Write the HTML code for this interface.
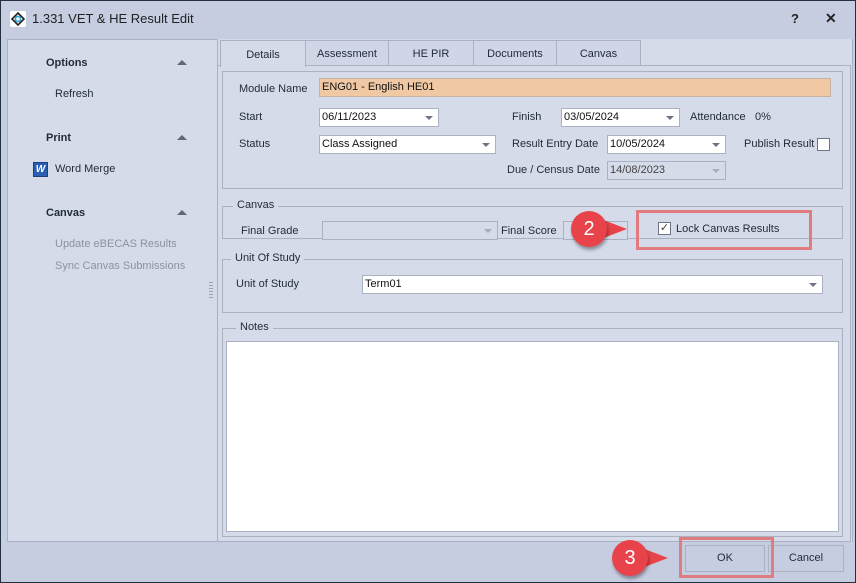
<!DOCTYPE html>
<html><head><style>
*{box-sizing:border-box;margin:0;padding:0}
body{width:856px;height:583px;overflow:hidden;font-family:"Liberation Sans",sans-serif;font-size:11px;color:#1e2a3a;background:#c7cde1;position:relative}
.a{position:absolute}
.win{left:0;top:0;width:856px;height:583px;border:1px solid #23303f}
.inp{position:absolute;background:#fff;border:1px solid #a9b1c3;height:19px;padding:2px 2px;font-size:11px;color:#111}
.dis{background:#d6dbe9;color:#444}
.arr{position:absolute;right:5px;top:7px;width:0;height:0;border-left:4px solid transparent;border-right:4px solid transparent;border-top:4px solid #6d7585}
.dis .arr{border-top-color:#a5acbb}
.grp{position:absolute;border:1px solid #a9b1c3}
.leg{position:absolute;top:-8px;background:#d6dbe9;padding:0 4px;color:#1e2a3a}
.tab{position:absolute;top:40px;height:26px;border:1px solid #a9b1c3;background:#d0d6e6;text-align:center;line-height:26px}
.badge{position:absolute;width:36px;height:36px;border-radius:50%;background:#e8434a;color:#fff;font-size:20px;text-align:center;line-height:36px;box-shadow:1px 3px 3px rgba(0,0,0,.35)}
.tri{position:absolute;width:0;height:0;border-top:13px solid transparent;border-bottom:13px solid transparent;border-left:34px solid #e8434a}
.rbox{position:absolute;border:3px solid #e07b80}
.up{position:absolute;width:0;height:0;border-left:5px solid transparent;border-right:5px solid transparent;border-bottom:5px solid #5f6778}
</style></head><body>
<div class="a win"></div>
<div class="a" style="left:10px;top:11px;width:16px;height:16px;background:#fff;border-radius:2px"></div>
<svg class="a" style="left:10px;top:11px" width="16" height="16" viewBox="0 0 16 16"><path d="M8 2 L14 8 L8 14 L2 8Z" fill="none" stroke="#222" stroke-width="1.6"/><circle cx="8" cy="8" r="2.6" fill="none" stroke="#2a9fd8" stroke-width="1.6"/></svg>
<div class="a" style="left:32px;top:11px;font-size:13px;color:#222">1.331 VET &amp; HE Result Edit</div>
<div class="a" style="left:791px;top:11px;font-size:13px;font-weight:bold;color:#222">?</div>
<div class="a" style="left:825px;top:10px;font-size:14px;font-weight:bold;color:#222">✕</div>
<div class="a" style="left:7px;top:39px;width:214px;height:503px;background:#d6dbe9;border:1px solid #a9b1c3"></div>
<div class="a" style="left:46px;top:57px;font-weight:bold">Options</div><div class="up" style="left:177px;top:60px"></div>
<div class="a" style="left:55px;top:88px">Refresh</div>
<div class="a" style="left:46px;top:132px;font-weight:bold">Print</div><div class="up" style="left:177px;top:135px"></div>
<div class="a" style="left:33px;top:162px;width:15px;height:15px;background:#2b5fb3;border:1px solid #1c3f80;color:#fff;font-size:10px;font-weight:bold;font-style:italic;text-align:center;line-height:13px">W</div>
<div class="a" style="left:55px;top:163px">Word Merge</div>
<div class="a" style="left:46px;top:207px;font-weight:bold">Canvas</div><div class="up" style="left:177px;top:210px"></div>
<div class="a" style="left:55px;top:238px;color:#8a92a3">Update eBECAS Results</div>
<div class="a" style="left:55px;top:260px;color:#8a92a3">Sync Canvas Submissions</div>
<div class="a" style="left:209px;top:282px;width:4px;height:16px;background:repeating-linear-gradient(#9aa2b2 0 1px,transparent 1px 3px)"></div>
<div class="a" style="left:217px;top:39px;width:636px;height:503px;background:#d6dbe9;border-left:1px solid #a9b1c3;border-right:1px solid #a9b1c3"></div>
<div class="a" style="left:217px;top:65px;width:634px;height:477px;border:1px solid #a9b1c3;background:#d6dbe9"></div>
<div class="tab" style="left:305px;width:84px">Assessment</div>
<div class="tab" style="left:388px;width:86px">HE PIR</div>
<div class="tab" style="left:473px;width:84px">Documents</div>
<div class="tab" style="left:556px;width:85px">Canvas</div>
<div class="tab" style="left:220px;width:86px;background:#d6dbe9;border-bottom:none;height:27px;line-height:28px">Details</div>
<div class="grp" style="left:222px;top:71px;width:621px;height:118px"></div>
<div class="a" style="left:239px;top:83px">Module Name</div>
<div class="inp" style="left:319px;top:78px;width:512px;height:19px;background:#f0c9a4;border-color:#c4b3a3;padding-top:2px">ENG01 - English HE01</div>
<div class="a" style="left:239px;top:111px">Start</div>
<div class="inp" style="left:319px;top:108px;width:120px">06/11/2023<i class="arr"></i></div>
<div class="a" style="left:512px;top:111px">Finish</div>
<div class="inp" style="left:561px;top:108px;width:119px">03/05/2024<i class="arr"></i></div>
<div class="a" style="left:690px;top:111px">Attendance</div><div class="a" style="left:755px;top:111px">0%</div>
<div class="a" style="left:239px;top:138px">Status</div>
<div class="inp" style="left:319px;top:135px;width:177px">Class Assigned<i class="arr"></i></div>
<div class="a" style="left:512px;top:138px">Result Entry Date</div>
<div class="inp" style="left:607px;top:135px;width:119px">10/05/2024<i class="arr"></i></div>
<div class="a" style="left:744px;top:138px">Publish Result</div>
<div class="a" style="left:817px;top:138px;width:13px;height:13px;background:#fff;border:1px solid #6d7585"></div>
<div class="a" style="left:507px;top:164px">Due / Census Date</div>
<div class="inp dis" style="left:607px;top:161px;width:119px">14/08/2023<i class="arr"></i></div>
<div class="grp" style="left:222px;top:206px;width:621px;height:33px"><span class="leg" style="left:10px">Canvas</span></div>
<div class="a" style="left:241px;top:225px">Final Grade</div>
<div class="inp dis" style="left:322px;top:221px;width:176px"><i class="arr"></i></div>
<div class="a" style="left:501px;top:225px">Final Score</div>
<div class="inp dis" style="left:563px;top:221px;width:65px"></div>
<div class="a" style="left:658px;top:222px;width:13px;height:13px;background:#fff;border:1px solid #6d7585;font-size:11px;line-height:11px;text-align:center;color:#444">✓</div>
<div class="a" style="left:676px;top:223px">Lock Canvas Results</div>
<div class="rbox" style="left:636px;top:210px;width:176px;height:40px"></div>
<div class="tri" style="left:593px;top:216px"></div>
<div class="badge" style="left:571px;top:211px">2</div>
<div class="grp" style="left:222px;top:259px;width:621px;height:54px"><span class="leg" style="left:8px">Unit Of Study</span></div>
<div class="a" style="left:236px;top:278px">Unit of Study</div>
<div class="inp" style="left:362px;top:275px;width:461px">Term01<i class="arr"></i></div>
<div class="grp" style="left:222px;top:328px;width:621px;height:209px"><span class="leg" style="left:13px">Notes</span></div>
<div class="a" style="left:226px;top:341px;width:613px;height:191px;background:#fff;border:1px solid #a9b1c3"></div>
<div class="a" style="left:685px;top:545px;width:80px;height:27px;border:1px solid #a9b1c3;text-align:center;line-height:25px">OK</div>
<div class="a" style="left:768px;top:545px;width:76px;height:27px;border:1px solid #a9b1c3;text-align:center;line-height:25px">Cancel</div>
<div class="rbox" style="left:679px;top:537px;width:95px;height:41px"></div>
<div class="tri" style="left:634px;top:545px"></div>
<div class="badge" style="left:612px;top:540px">3</div>
</body></html>
